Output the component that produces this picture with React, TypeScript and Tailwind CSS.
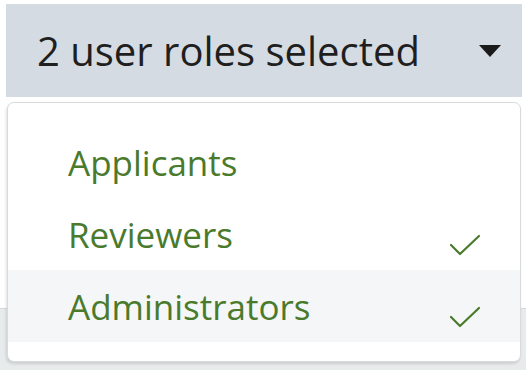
const roles = [
  { name: "Applicants", checked: false, active: false },
  { name: "Reviewers", checked: true, active: false },
  { name: "Administrators", checked: true, active: true },
]

function Check() {
  return (
    <svg width="32" height="22" viewBox="0 0 32 22" fill="none" className="mt-[22px]">
      <path d="M2 11 L11 20 L30 2" stroke="#4a7a2c" strokeWidth="2.2" strokeLinecap="round" strokeLinejoin="round" />
    </svg>
  )
}

export default function App() {
  return (
    <div className="w-[526px] h-[370px] bg-white overflow-hidden font-['Open_Sans',sans-serif] pt-[4px] pl-[6px] pr-[4px]">
      {/* trigger */}
      <button className="w-full h-[93px] bg-[#d5dbe2] flex items-center justify-between pl-[31px] pr-[21px] text-[#1f1f1f]">
        <span className="text-[40px] leading-none">2 user roles selected</span>
        <svg width="22" height="12" viewBox="0 0 22 12">
          <path d="M0 0 H22 L11 12 Z" fill="#1a1a1a" />
        </svg>
      </button>

      {/* content under the menu */}
      <div className="relative -ml-[6px] -mr-[4px] h-[273px]">
        <div className="h-[211px]" />
        <div className="h-[62px] bg-[#e7ebeb] border-t border-[#d3d8d8]" />

        {/* menu */}
        <div className="absolute top-[5px] left-[7px] right-[5px] h-[260px] bg-white rounded-[7px] border border-[#d7dbdb] shadow-[-1px_2px_3px_rgba(0,0,0,0.12)] pt-[23px]">
          {roles.map((r) => (
            <div
              key={r.name}
              className={`h-[72px] flex items-center justify-between pl-[60px] pr-[39px] ${r.active ? "bg-[#f4f6f7]" : ""}`}
            >
              <span className="text-[35px] leading-none text-[#4a7a2c]">{r.name}</span>
              {r.checked && <Check />}
            </div>
          ))}
        </div>
      </div>
    </div>
  )
}
